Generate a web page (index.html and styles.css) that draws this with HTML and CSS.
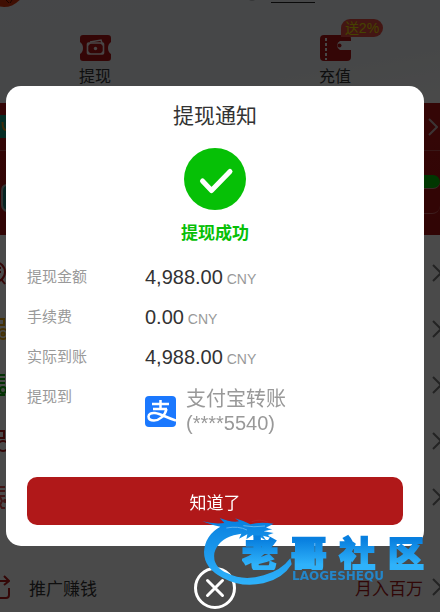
FILE: index.html
```html
<!DOCTYPE html>
<html lang="zh-CN">
<head>
<meta charset="utf-8">
<meta name="viewport" content="width=device-width, initial-scale=1">
<title>提现通知</title>
<link rel="stylesheet" href="styles.css">
</head>
<body>
<main class="page">
  <header class="top">
    <svg class="top-art" width="330" height="10" viewBox="0 0 330 10" aria-hidden="true">
      <circle cx="4" cy="-14" r="21" fill="#d8350c"/>
      <path d="M6 0l3 3M12 0l-2 3" stroke="#541000" fill="none"/>
      <circle cx="252" cy="-4" r="5" fill="#b5b8bb"/>
      <path d="M271 2.500h44" stroke="#222"/>
    </svg>
    <nav class="actions">
      <a class="action" href="#withdraw">
        <svg width="31" height="26" viewBox="0 0 31 26" aria-hidden="true">
          <path d="M3 0h25q3 0 3 3v4q-3 2-3 6t3 6v4q0 3-3 3H3q-3 0-3-3v-4q3-2 3-6T0 7V3q0-3 3-3z" fill="#b01515"/>
          <path d="M10 7l11-2 1 3" fill="none" stroke="#f3e9e9" stroke-width="1.500"/>
          <rect x="7.500" y="8" width="16" height="11" rx="1" fill="#b01515" stroke="#f3e9e9" stroke-width="1.600"/>
          <path d="M8 8h3L8 11zM20 8h3v3zM8 16v3h3zM23 16v3h-3z" fill="#f3e9e9"/>
          <circle cx="15.500" cy="13.500" r="1.700" fill="#f3e9e9"/>
        </svg>
        <span>提现</span>
      </a>
      <a class="action" href="#deposit">
        <svg width="31" height="26" viewBox="0 0 31 26" aria-hidden="true">
          <path d="M4 0h23q4 0 4 4v2H20a5 5 0 0 0 0 9h11v7q0 4-4 4H4q-4 0-4-4V4q0-4 4-4z" fill="#b01515"/>
          <path d="M6 3v22" stroke="#eee" stroke-width="2" stroke-dasharray="3 2"/>
          <circle cx="19.500" cy="10.500" r="2" fill="#b01515"/>
        </svg>
        <span>充值</span>
        <em class="badge">送2%</em>
      </a>
    </nav>
  </header>
  <section class="vip">
    <div class="vip-row vip-head">
      <svg width="6" height="23" viewBox="0 0 6 23" aria-hidden="true"><path d="M0 0h6v23H0z" fill="#15967c"/><path d="M2.500 7q0 8 3.500 8" fill="none" stroke="#d59220" stroke-width="2"/></svg>
      <svg class="chevron chevron-light" width="10" height="18" viewBox="0 0 10 18" aria-hidden="true"><path d="M1 1l8 8-8 8"/></svg>
    </div>
    <div class="vip-row vip-body">
      <svg width="6" height="34" viewBox="0 0 6 34" aria-hidden="true"><path d="M6 2Q2 3 2 8v14q0 4 4 6" fill="#167b73" stroke="#aaa" stroke-width="2"/></svg>
      <div class="vip-progress"><i class="vip-bar"></i><i class="vip-box"></i></div>
    </div>
  </section>
  <section class="list">
    <a class="row" href="#records">
      <svg class="row-icon dark-red" width="24" height="24" viewBox="0 0 24 24" aria-hidden="true"><circle cx="13" cy="11" r="10"/><path d="M19 18l4 5M15 7h4M15 11h4M15 15h3"/></svg>
      <svg class="chevron" width="10" height="18" viewBox="0 0 10 18" aria-hidden="true"><path d="M1 1l8 8-8 8"/></svg>
    </a>
    <a class="row" href="#account">
      <svg class="row-icon orange" width="24" height="24" viewBox="0 0 24 24" aria-hidden="true"><path d="M2 2h20v6h-6M2 2v20h12"/><circle cx="21" cy="17" r="5"/><circle cx="21" cy="17" r="1.500"/></svg>
      <svg class="chevron" width="10" height="18" viewBox="0 0 10 18" aria-hidden="true"><path d="M1 1l8 8-8 8"/></svg>
    </a>
    <a class="row" href="#bets">
      <svg class="row-icon green" width="24" height="24" viewBox="0 0 24 24" aria-hidden="true"><path d="M2 2h21M16 6h7M16 10h7M2 2v20h21"/><circle cx="21" cy="17" r="3"/></svg>
      <svg class="chevron" width="10" height="18" viewBox="0 0 10 18" aria-hidden="true"><path d="M1 1l8 8-8 8"/></svg>
    </a>
    <a class="row" href="#profile">
      <svg class="row-icon red" width="24" height="24" viewBox="0 0 24 24" aria-hidden="true"><path d="M2 2h20v7h-6M2 2v20h12"/><circle cx="21" cy="17" r="5"/></svg>
      <svg class="chevron" width="10" height="18" viewBox="0 0 10 18" aria-hidden="true"><path d="M1 1l8 8-8 8"/></svg>
    </a>
    <a class="row" href="#security">
      <svg class="row-icon pink" width="24" height="24" viewBox="0 0 24 24" aria-hidden="true"><path d="M2 2h21M16 6h7M2 2v20M17 11h6M18 12l2 4-2 4 2 3h3"/><circle cx="23" cy="16" r="1"/></svg>
      <svg class="chevron" width="10" height="18" viewBox="0 0 10 18" aria-hidden="true"><path d="M1 1l8 8-8 8"/></svg>
    </a>
  </section>
  <section class="list promo">
    <a class="row" href="#promo">
      <svg class="share-icon" width="10" height="24" viewBox="0 0 10 24" aria-hidden="true"><path d="M0 6h8M4 1l5 5-5 4M9 13v7q0 3-3 3H0"/></svg>
      <span class="promo-name">推广赚钱</span>
      <span class="promo-note">月入百万</span>
      <svg class="chevron" width="10" height="18" viewBox="0 0 10 18" aria-hidden="true"><path d="M1 1l8 8-8 8"/></svg>
    </a>
  </section>
</main>

<div class="overlay">
  <div class="dialog" role="dialog" aria-labelledby="dialog-title">
    <h1 class="title" id="dialog-title">提现通知</h1>
    <svg class="check" width="62" height="62" viewBox="0 0 62 62" aria-hidden="true">
      <circle cx="31" cy="31" r="31" fill="#06c006"/>
      <path d="M18.500 33l9 9.500L46 23.500" fill="none" stroke="#fff" stroke-width="5" stroke-linecap="round" stroke-linejoin="round"/>
    </svg>
    <p class="status">提现成功</p>
    <dl class="details">
      <dt>提现金额</dt><dd>4,988.00<small> CNY</small></dd>
      <dt>手续费</dt><dd>0.00<small> CNY</small></dd>
      <dt>实际到账</dt><dd>4,988.00<small> CNY</small></dd>
      <dt>提现到</dt>
      <dd class="method">
        <svg width="31" height="31" viewBox="0 0 31 31" aria-hidden="true">
          <rect width="31" height="31" rx="4" fill="#1b78fe"/>
          <path d="M7 8h17M15.500 4v9M8 13h14M21.500 13C20 20 14 24.500 9 24.500c-4 0-5.500-2-5.500-4 0-2.500 3-4 6.500-3.500 6 .8 11 4.500 21 7.500" fill="none" stroke="#fff" stroke-width="2.500"/>
        </svg>
        <span>支付宝转账<br>(****5540)</span>
      </dd>
    </dl>
    <button class="confirm" type="button">知道了</button>
  </div>
  <button class="close" type="button" aria-label="关闭">
    <svg width="42" height="42" viewBox="0 0 42 42" aria-hidden="true"><circle cx="21" cy="21" r="19.500"/><path d="M13.500 13.500l15 15M28.500 13.500l-15 15"/></svg>
  </button>
  <div class="brand">
    <svg class="dragon" width="110" height="80" viewBox="0 0 330 240" aria-hidden="true">
      <defs><linearGradient id="blue" x1="0" y1="0" x2="0" y2="1"><stop offset="0" stop-color="#087fdf"/><stop offset="1" stop-color="#2fb2fa"/></linearGradient></defs>
      <path fill="url(#blue)" d="M22 34Q58 43 88 39L74 24Q108 38 132 34L120 25Q148 33 166 43Q194 34 236 41L218 50Q204 51 232 58L206 64L236 69L219 75L227 83L204 77L214 92L192 79L180 90L174 74L154 88L157 73L132 86L139 71L116 76Q70 89 58 129Q52 171 98 190Q145 214 206 196Q258 182 286 145L290 163Q263 207 205 220Q139 234 84 204Q27 175 27 126Q30 75 76 50Q52 46 22 34Z"/>
      <path d="M94 54q36-7 62 6M145 47q31 6 65 1" fill="none" stroke="#60b3ed" stroke-width="3"/>
      <path d="M170 35q25-10 49 2" fill="none" stroke="#b62225" stroke-width="3"/>
    </svg>
    <div class="brand-copy">
      <div class="brand-name"><span>老</span><span>哥</span><span>社</span><span>区</span></div>
      <div class="brand-latin">LAOGESHEQU</div>
    </div>
  </div>
</div>
</body>
</html>
```

FILE: styles.css
```css
* { box-sizing: border-box; }
body {
  margin: 0;
  min-height: 100vh;
  overflow: hidden;
  background: #f8f8f8;
  color: #333;
  font-family: "Liberation Sans", "Noto Sans CJK SC", sans-serif;
}
a { color: inherit; text-decoration: none; }
h1, p, dl, dd { margin: 0; }
button { border: 0; padding: 0; font: inherit; }

.page { height: 100vh; overflow: hidden; }
.top {
  height: 103px;
  background: linear-gradient(170deg, #eceff3, #e9edf0 60%, #f5f5f5);
}
.top-art { display: block; }
.actions {
  display: grid;
  grid-template-columns: 1fr 1fr;
  margin: 0 -15px 0 -25px;
  padding-top: 25px;
}
.action {
  position: relative;
  display: flex;
  flex-direction: column;
  align-items: center;
  gap: 4px;
  font-size: 16px;
  line-height: 24px;
}
.badge {
  position: absolute;
  left: 50%;
  top: -16px;
  width: 42px;
  margin-left: 6px;
  border-radius: 9px 9px 9px 0;
  background: #e24b41;
  color: #e8df00;
  font-size: 14px;
  font-style: normal;
  line-height: 18px;
  text-align: center;
}

.vip { height: 132px; background: linear-gradient(#b01515, #a51212); }
.vip-row { display: flex; justify-content: space-between; }
.vip-head {
  height: 48px;
  align-items: center;
  padding-right: 2px;
  border-bottom: 1px solid #bd5050;
}
.vip-body { padding-top: 24px; align-items: flex-start; }
.vip-body svg { margin-top: 8px; }
.vip-progress { width: 70px; }
.vip-bar { display: block; height: 14px; border-radius: 7px; background: #05b805; border-bottom: 1px solid #c88; }
.vip-box { display: block; height: 25px; border-bottom: 1px solid #c66; border-radius: 0 0 8px 0; }

.list { padding-top: 10px; }
.row { display: flex; align-items: center; height: 56px; }
.row svg { fill: none; stroke-width: 2; }
.row-icon { margin-left: -18px; }
.row .chevron { margin-left: auto; margin-right: -2px; flex: none; }
.chevron { fill: none; stroke: #777; stroke-width: 2; }
.chevron-light { stroke: #c8b0b0; }
.dark-red, .red, .share-icon { stroke: #b01818; }
.orange { stroke: #e5a510; }
.green { stroke: #0ca80c; }
.pink { stroke: #d64a4a; }
.promo { padding-top: 34px; font-size: 17px; }
.promo-name { margin-left: 19px; }
.promo-note { margin-left: auto; color: #a51818; }
.row .promo-note + .chevron { margin-left: 9px; }

.overlay {
  position: fixed;
  inset: 0;
  display: flex;
  flex-direction: column;
  align-items: center;
  padding: 86px 16px 0 6px;
  background: rgba(0, 0, 0, 0.7);
}
.dialog {
  width: 100%;
  padding: 15px 21px 21px;
  border-radius: 15px;
  background: #fff;
  text-align: center;
}
.title { font-size: 21px; font-weight: 400; line-height: 30px; }
.check { display: block; margin: 17px auto 11px; }
.status { color: #06c006; font-size: 17px; font-weight: 700; line-height: 26px; }
.details {
  display: grid;
  grid-template-columns: 118px 1fr;
  row-gap: 12px;
  margin-top: 16px;
  text-align: left;
}
.details dt,
.details dd { height: 28px; line-height: 28px; }
.details dt { color: #999; font-size: 15px; }
.details dd { font-size: 20px; }
.details small { color: #999; font-size: 14px; }
.details .method {
  display: flex;
  align-items: center;
  gap: 10px;
  height: auto;
  margin-top: 4px;
  color: #999;
  line-height: 24px;
}
.confirm {
  display: block;
  width: 100%;
  height: 48px;
  margin-top: 42px;
  border-radius: 10px;
  background: #b01819;
  color: #fff;
  font-size: 17px;
}
.close { margin-top: 21px; background: none; }
.close svg { display: block; fill: none; stroke: #fff; stroke-width: 3; stroke-linecap: round; }

.brand { position: absolute; right: 16px; top: 510px; width: 229px; height: 80px; pointer-events: none; }
.dragon { position: absolute; left: 0; top: 0; }
.brand-copy { position: relative; padding: 24px 0 0 47px; }
.brand-name {
  display: flex;
  justify-content: space-between;
  background: linear-gradient(#087fdf 15%, #2fb2fa 85%);
  background-clip: text;
  -webkit-background-clip: text;
  color: transparent;
  -webkit-text-stroke: 2px transparent;
  font-family: "Noto Sans CJK SC", sans-serif;
  font-size: 36px;
  font-weight: 900;
  line-height: 36px;
}
.brand-latin {
  padding-left: 50px;
  color: #2486c9;
  font-family: "DejaVu Sans", sans-serif;
  font-size: 12px;
  font-weight: 700;
  line-height: 12px;
}
```
